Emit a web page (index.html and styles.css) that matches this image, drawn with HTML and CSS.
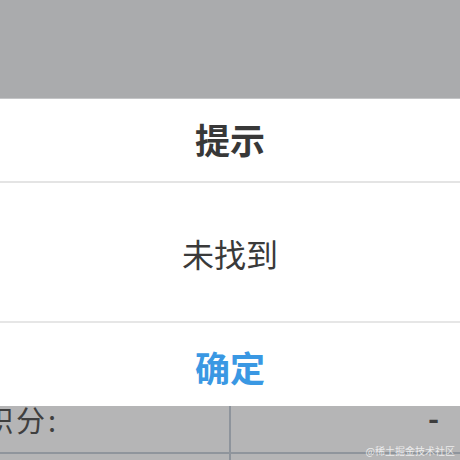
FILE: index.html
```html
<!DOCTYPE html>
<html lang="zh">
<head>
<meta charset="utf-8">
<link rel="stylesheet" href="styles.css">
</head>
<body>
<div class="screen">
  <div class="mask"></div>
  <div class="dialog">
    <div class="title">提示</div>
    <div class="message">未找到</div>
    <div class="actions">确定</div>
  </div>
  <div class="table">
    <div class="row">
      <div class="cell label"><span class="label-text">积分:</span></div>
      <div class="cell value">-</div>
    </div>
    <div class="row rest">
      <div class="cell"></div>
      <div class="cell"></div>
    </div>
  </div>
  <div class="watermark">@稀土掘金技术社区</div>
</div>
</body>
</html>
```
FILE: styles.css
```css
html, body {
  margin: 0;
  padding: 0;
}
body {
  width: 460px;
  height: 460px;
  overflow: hidden;
  font-family: "Noto Sans CJK SC", "Noto Sans", sans-serif;
  background: #b3b3b4;
}
.screen {
  position: relative;
  width: 460px;
  height: 460px;
  overflow: hidden;
  display: flex;
  flex-direction: column;
}
.mask {
  height: 99px;
  background: #aaabad;
  border-bottom: 1px solid #c4c5c7;
  box-sizing: border-box;
}
.dialog {
  background: #ffffff;
  display: flex;
  flex-direction: column;
}
.title {
  height: 84px;
  display: flex;
  align-items: center;
  justify-content: center;
  font-size: 35px;
  font-weight: bold;
  color: #383838;
  padding-bottom: 4px;
  box-sizing: border-box;
  border-bottom: 2px solid #e4e4e4;
}
.message {
  height: 140px;
  display: flex;
  align-items: center;
  justify-content: center;
  font-size: 32px;
  color: #3a3a3a;
  padding-top: 2px;
  box-sizing: border-box;
  border-bottom: 2px solid #e6e6e6;
}
.actions {
  height: 83px;
  display: flex;
  align-items: center;
  justify-content: center;
  font-size: 35px;
  font-weight: bold;
  color: #3a98e3;
  padding-top: 3px;
  box-sizing: border-box;
}
.table {
  flex: 1;
  display: flex;
  flex-direction: column;
  background: #b5b5b6;
}
.row {
  display: flex;
  height: 48px;
  border-bottom: 2px solid #8f959c;
  box-sizing: border-box;
}
.row.rest {
  flex: 1;
  border-bottom: none;
}
.cell {
  box-sizing: border-box;
}
.cell:first-child {
  width: 231px;
  border-right: 2px solid #8e949c;
}
.cell.value {
  flex: 1;
  display: flex;
  justify-content: flex-end;
  align-items: center;
  padding-right: 21px;
  padding-bottom: 24px;
  font-size: 30px;
  font-weight: bold;
  color: #3d3d3d;
}
.label {
  display: flex;
  align-items: center;
  padding-bottom: 20px;
  overflow: hidden;
}
.label-text {
  margin-left: -16px;
  font-size: 29px;
  color: #3f3f3f;
  letter-spacing: 3px;
  white-space: nowrap;
}
.watermark {
  position: absolute;
  right: 5px;
  bottom: 2px;
  font-size: 10px;
  color: rgba(255, 255, 255, 0.75);
}
```
